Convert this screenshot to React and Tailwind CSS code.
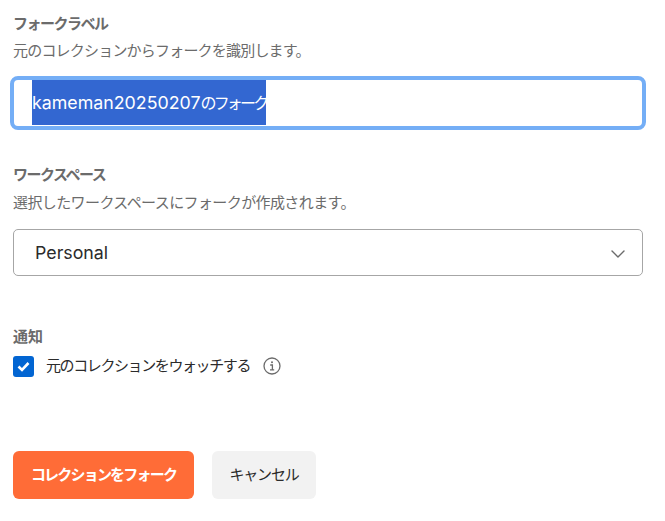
import { ChevronDown } from "lucide-react";

const cjk = "font-['Inter','Noto_Sans_CJK_JP',sans-serif]";

const App = () => {
  return (
    <div className={`${cjk} w-[665px] h-[521px] bg-white overflow-hidden pl-[13px] pr-[22px] pt-[14px]`}>
      {/* Fork label */}
      <div className="h-[20px] text-[15px] tracking-[-1.5px] leading-[20px] font-bold text-[#6b6b6b]">フォークラベル</div>
      <div className="mt-[7px] h-[20px] text-[15px] tracking-[-0.8px] leading-[20px] text-[#6b6b6b]">元のコレクションからフォークを識別します。</div>
      <div className="mt-[15px] -mx-[3px] h-[54px] rounded-[8px] border-4 border-[#74aef6] bg-white pl-[18px] flex items-center">
        <span className="mb-[2px] h-[45px] bg-[#3367d1] text-white text-[17.8px] leading-[45px]">
          kameman20250207<span className="text-[16px] tracking-[-2.8px]">のフォーク</span>
        </span>
      </div>

      {/* Workspace */}
      <div className="mt-[35px] h-[20px] text-[15px] tracking-[-1.5px] leading-[20px] font-bold text-[#6b6b6b]">ワークスペース</div>
      <div className="mt-[8px] h-[20px] text-[15px] tracking-[-0.6px] leading-[20px] text-[#6b6b6b]">選択したワークスペースにフォークが作成されます。</div>
      <div className="mt-[16px] h-[47px] rounded-[5px] border border-[#a6a6a6] pl-[21px] pr-[12px] pt-[2px] flex items-center justify-between text-[17.8px] text-[#2b2b2b]">
        <span>Personal</span>
        <ChevronDown className="w-[24px] h-[24px] text-[#6b6b6b]" strokeWidth={1.4} />
      </div>

      {/* Notifications */}
      <div className="mt-[51px] h-[20px] text-[15px] leading-[20px] font-bold text-[#6b6b6b]">通知</div>
      <div className="mt-[8px] flex items-center h-[22px]">
        <span className="w-[21px] h-[21px] rounded-[3px] bg-[#0265d2] flex items-center justify-center">
          <svg width="13" height="11" viewBox="0 0 13 11" fill="none">
            <path d="M1.5 5.5L5 9L11.5 2" stroke="white" strokeWidth="2.6" />
          </svg>
        </span>
        <span className="ml-[12px] text-[15px] tracking-[-1.4px] text-[#2b2b2b]">元のコレクションをウォッチする</span>
        <svg className="ml-[13px]" width="18" height="18" viewBox="0 0 18 18" fill="none">
          <circle cx="9" cy="9" r="8" stroke="#6b6b6b" strokeWidth="1.3" />
          <circle cx="9" cy="5.3" r="1" fill="#6b6b6b" />
          <path d="M7.2 8H9.4V12.6M7 12.8H11.2" stroke="#6b6b6b" strokeWidth="1.3" />
        </svg>
      </div>

      {/* Actions */}
      <div className="mt-[74px] flex gap-[18px]">
        <button className="h-[48px] w-[181px] rounded-[6px] bg-[#ff6c37] text-white text-[15px] tracking-[-1.8px] font-bold">コレクションをフォーク</button>
        <button className="h-[48px] w-[104px] rounded-[6px] bg-[#f2f2f2] text-[#2b2b2b] text-[15px] tracking-[-1.2px]">キャンセル</button>
      </div>
    </div>
  );
};

export default App;
